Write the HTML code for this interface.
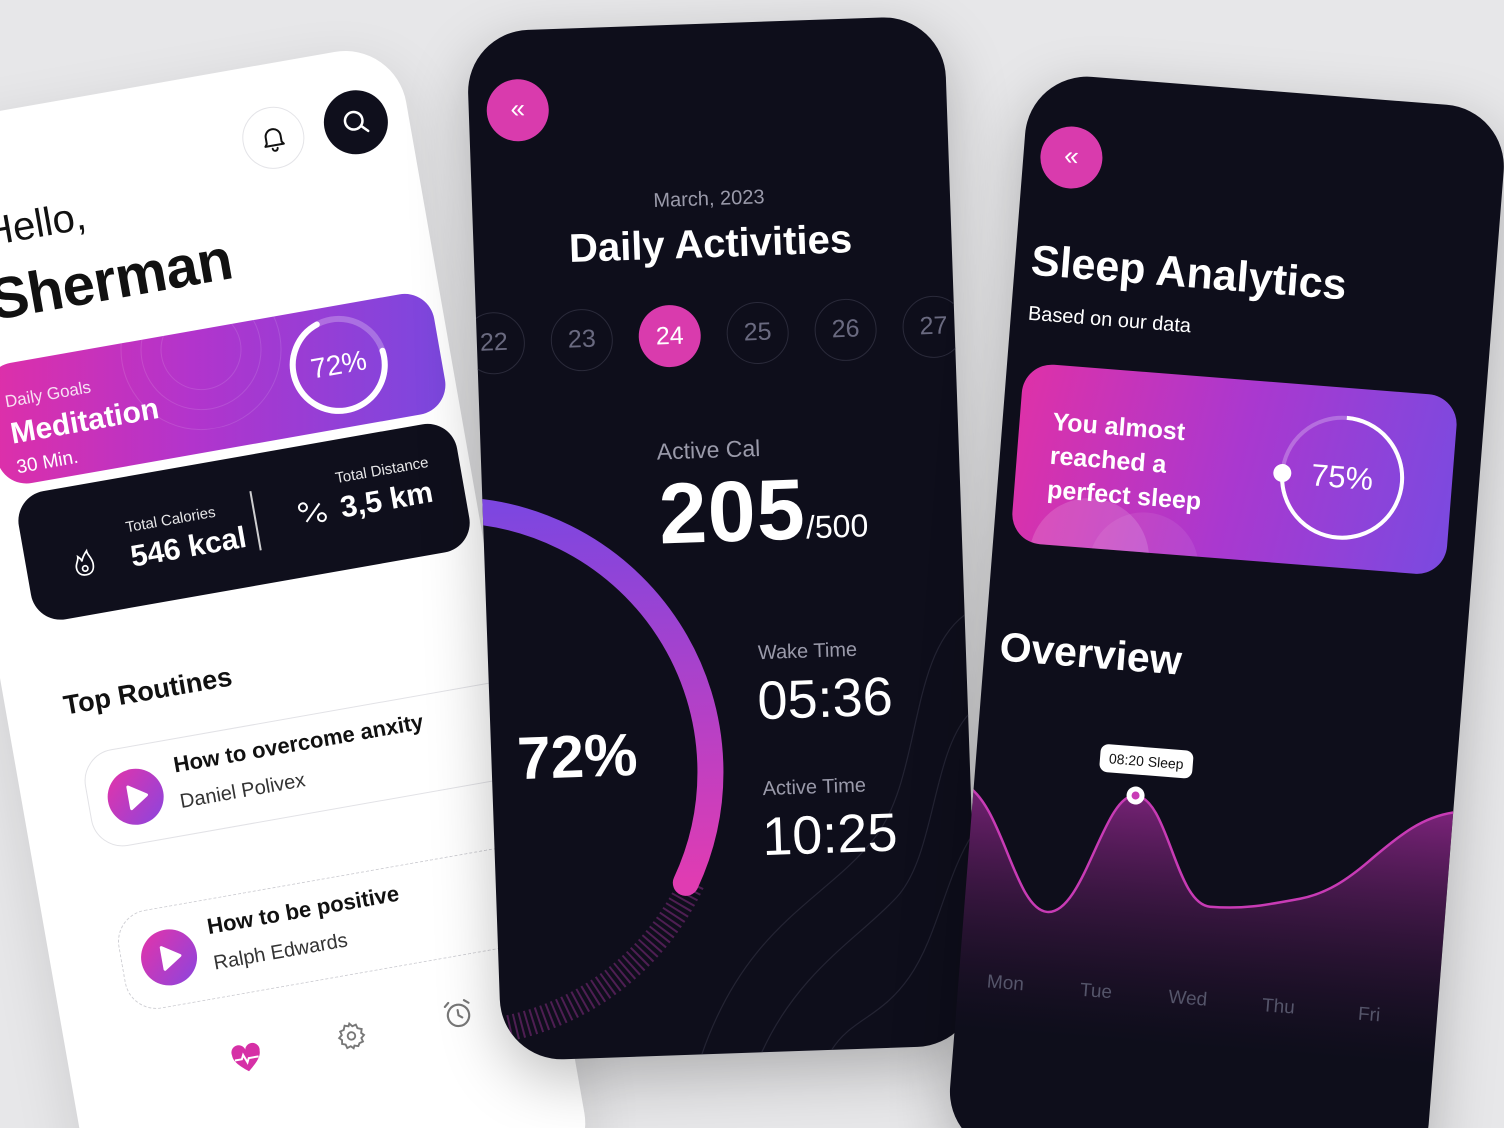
<!DOCTYPE html>
<html style="width:1504px;height:1128px;overflow:hidden"><head><meta charset="utf-8"><style>
*{margin:0;padding:0;box-sizing:border-box}
body{width:1504px;height:1128px;overflow:hidden;background:#e7e7e9;font-family:"Liberation Sans",sans-serif;position:relative}
.ph{position:absolute;transform-origin:0 0;border-radius:62px;overflow:hidden}
.a{position:absolute}
.c{position:absolute;transform:translate(-50%,-50%);white-space:nowrap}
.w{color:#fff}
</style></head><body>

<!-- LEFT PHONE -->
<div class="ph" style="left:-97px;top:128px;width:500px;height:1150px;background:#fff;transform:rotate(-10deg);z-index:1;box-shadow:0 20px 60px rgba(0,0,0,.12)">
  <div class="c" style="left:363px;top:74px;width:62px;height:62px;border-radius:50%;border:1.5px solid #e4e4e8;background:#fff;transform:translate(-50%,-50%)">
    <svg width="30" height="30" viewBox="0 0 24 24" style="position:absolute;left:15px;top:15px" fill="none" stroke="#111" stroke-width="1.6" stroke-linecap="round" stroke-linejoin="round"><path d="M6 16V11a6 6 0 0 1 12 0v5l1.5 2h-15z"/><path d="M10 20.5a2 2 0 0 0 4 0"/></svg>
  </div>
  <div class="c" style="left:447px;top:73px;width:64px;height:64px;border-radius:50%;background:#0f0f1c">
    <svg width="30" height="30" viewBox="0 0 24 24" style="position:absolute;left:17px;top:17px" fill="none" stroke="#fff" stroke-width="2" stroke-linecap="round"><circle cx="10.5" cy="10.5" r="7"/><path d="M16 16l4.5 4.5"/></svg>
  </div>
  <div class="a" style="left:62px;top:96px;font-size:40px;color:#111">Hello,</div>
  <div class="a" style="left:56px;top:152px;font-size:58px;font-weight:bold;color:#111;letter-spacing:-0.5px">Sherman</div>

  <div class="a" style="left:45px;top:382px;width:445px;height:130px;border-radius:30px;background:#0f0f1c">
    <div class="a w" style="left:105px;top:42px;font-size:15px;opacity:.9">Total Calories</div>
    <div class="a w" style="left:105px;top:64px;font-size:30px;font-weight:bold">546 kcal</div>
    <svg class="a" style="left:45px;top:62px" width="26" height="30" viewBox="0 0 24 28" fill="none" stroke="#fff" stroke-width="1.6"><path d="M12 26c-5 0-8-3-8-8 0-4 3-6 3-10 2 2 3 3 3 5 1-3 3-6 6-9 0 4 4 7 4 13 0 6-3 9-8 9z"/><circle cx="12" cy="20" r="2.5"/></svg>
    <div class="a" style="left:233px;top:36px;width:2px;height:60px;background:#fff;opacity:.8"></div>
    <div class="a w" style="left:320px;top:30px;font-size:15px;opacity:.9">Total Distance</div>
    <div class="a w" style="left:320px;top:52px;font-size:30px;font-weight:bold">3,5 km</div>
    <svg class="a" style="left:276px;top:54px" width="32" height="28" viewBox="0 0 32 28" fill="none" stroke="#fff" stroke-width="2"><circle cx="7" cy="7" r="4"/><circle cx="24" cy="20" r="4"/><path d="M24 6L8 22"/></svg>
  </div>

  <div class="a" style="left:35px;top:250px;width:455px;height:122px;border-radius:30px;background:linear-gradient(100deg,#e02fa7 0%,#b234cc 45%,#7a48df 100%);overflow:hidden">
    <svg class="a" style="left:90px;top:-60px" width="260" height="160"><g fill="none" stroke="#fff" stroke-opacity=".12"><circle cx="130" cy="80" r="40"/><circle cx="130" cy="80" r="60"/><circle cx="130" cy="80" r="80"/></g></svg>
    <div class="a w" style="left:18px;top:28px;font-size:17px;opacity:.85">Daily Goals</div>
    <div class="a w" style="left:18px;top:54px;font-size:30px;font-weight:bold">Meditation</div>
    <div class="a w" style="left:18px;top:94px;font-size:19px">30 Min.</div>
    <svg class="a" style="left:301px;top:7px" width="104" height="104" viewBox="0 0 104 104"><circle cx="52" cy="52" r="46" fill="none" stroke="#fff" stroke-opacity=".25" stroke-width="6"/><circle cx="52" cy="52" r="46" fill="none" stroke="#fff" stroke-width="6" stroke-linecap="round" stroke-dasharray="208 289" transform="rotate(-8 52 52)"/></svg>
    <div class="c w" style="left:353px;top:59px;font-size:28px">72%</div>
  </div>

  <div class="a" style="left:58px;top:582px;font-size:27px;font-weight:bold;color:#111">Top Routines</div>

  <div class="a" style="left:65px;top:648px;width:520px;height:98px;border-radius:32px;border:1.5px solid #e2e2e6;background:#fff">
    <div class="c" style="left:47px;top:50px;width:56px;height:56px;border-radius:50%;background:linear-gradient(135deg,#e533a8,#8a45df)"><svg width="56" height="56" viewBox="0 0 56 56"><path d="M22 17l17 11-17 11z" fill="#fff" stroke="#fff" stroke-width="3" stroke-linejoin="round"/></svg></div>
    <div class="a" style="left:90px;top:13px;font-size:22px;font-weight:bold;color:#111">How to overcome anxity</div>
    <div class="a" style="left:90px;top:52px;font-size:20px;color:#333">Daniel Polivex</div>
  </div>
  <div class="a" style="left:70px;top:812px;width:520px;height:100px;border-radius:32px;border:1.5px dashed #cfcfd4;background:#fff">
    <div class="c" style="left:47px;top:50px;width:56px;height:56px;border-radius:50%;background:linear-gradient(135deg,#e533a8,#8a45df)"><svg width="56" height="56" viewBox="0 0 56 56"><path d="M22 17l17 11-17 11z" fill="#fff" stroke="#fff" stroke-width="3" stroke-linejoin="round"/></svg></div>
    <div class="a" style="left:90px;top:14px;font-size:22px;font-weight:bold;color:#111">How to be positive</div>
    <div class="a" style="left:90px;top:53px;font-size:20px;color:#333">Ralph Edwards</div>
  </div>

  <svg class="c" style="left:177px;top:976px" width="32" height="30" viewBox="0 0 32 30"><path d="M16 28C6 20 2 15 2 9.5A7 7 0 0 1 16 6a7 7 0 0 1 14 3.5C30 15 26 20 16 28z" fill="#d630a6"/><path d="M4 15h7l2-4 3 8 2-4h10" fill="none" stroke="#fff" stroke-width="2"/></svg>
  <svg class="c" style="left:284px;top:972px" width="30" height="30" viewBox="0 0 24 24" fill="none" stroke="#777" stroke-width="1.5"><circle cx="12" cy="12" r="3"/><path d="M12 2l2 2.5 3-.8.8 3L21 8l-1 3 2 2-2.5 2 .8 3-3 .8L16 21l-3-1-1 2-2-2-3 1-.8-3L3.5 17 4 14 2 12l2.5-2L3.7 7l3-.8L8 3l3 1z"/></svg>
  <svg class="c" style="left:393px;top:969px" width="32" height="32" viewBox="0 0 24 24" fill="none" stroke="#777" stroke-width="1.6" stroke-linecap="round"><circle cx="12" cy="13" r="8"/><path d="M12 9v4l2.5 2M3 5l3-2.5M21 5l-3-2.5"/></svg>
</div>

<!-- MIDDLE PHONE -->
<div class="ph" style="left:466px;top:32px;width:478px;height:1030px;background:#0e0e1b;transform:rotate(-2deg);z-index:2;box-shadow:0 20px 60px rgba(0,0,0,.25)">
  <svg class="a" style="left:0;top:0" width="478" height="1030">
    <defs><linearGradient id="ag" x1="0" y1="0" x2="0" y2="1"><stop offset="0" stop-color="#7d46e0"/><stop offset="1" stop-color="#e03cb2"/></linearGradient></defs>
    <g fill="none" stroke="#2a2a3a" stroke-width="1.2" opacity=".8">
      <path d="M478 600C420 640 430 760 380 820S250 900 200 1030"/>
      <path d="M478 700C440 740 440 840 400 880S300 950 260 1030"/>
      <path d="M478 820C450 860 440 920 410 960S350 1000 330 1030"/>
    </g>
    <path d="M196 858A262 262 0 0 1 8 997" fill="none" stroke="#7a2a78" stroke-width="26" stroke-dasharray="2 4" opacity=".6"/>
    <path d="M-37 477A262 262 0 0 1 190 858" fill="none" stroke="url(#ag)" stroke-width="26" stroke-linecap="round"/>
  </svg>
  <div class="c" style="left:49px;top:80px;width:62px;height:62px;border-radius:50%;background:#d93bad;color:#fff;font-size:26px;line-height:58px;text-align:center">«</div>
  <div class="c" style="left:237px;top:176px;font-size:20px;color:#9a9aaa">March, 2023</div>
  <div class="c w" style="left:237px;top:221px;font-size:40px;font-weight:bold">Daily Activities</div>
  <div class="c" style="left:17px;top:312px;width:62px;height:62px;border-radius:50%;border:1.5px solid #2a2a3a;color:#6a6a80;font-size:25px;line-height:59px;text-align:center">22</div>
  <div class="c" style="left:105px;top:312px;width:62px;height:62px;border-radius:50%;border:1.5px solid #2a2a3a;color:#6a6a80;font-size:25px;line-height:59px;text-align:center">23</div>
  <div class="c" style="left:193px;top:311px;width:62px;height:62px;border-radius:50%;background:#d93bad;color:#fff;font-size:25px;line-height:62px;text-align:center">24</div>
  <div class="c" style="left:281px;top:311px;width:62px;height:62px;border-radius:50%;border:1.5px solid #2a2a3a;color:#6a6a80;font-size:25px;line-height:59px;text-align:center">25</div>
  <div class="c" style="left:369px;top:311px;width:62px;height:62px;border-radius:50%;border:1.5px solid #2a2a3a;color:#6a6a80;font-size:25px;line-height:59px;text-align:center">26</div>
  <div class="c" style="left:457px;top:311px;width:62px;height:62px;border-radius:50%;border:1.5px solid #2a2a3a;color:#6a6a80;font-size:25px;line-height:59px;text-align:center">27</div>
  <div class="a" style="left:176px;top:413px;font-size:23px;color:#9a9aaa">Active Cal</div>
  <div class="a w" style="left:176px;top:440px;font-size:86px;font-weight:bold;letter-spacing:1px">205<span style="font-size:32px;font-weight:normal;letter-spacing:0">/500</span></div>
  <div class="c w" style="left:86px;top:728px;font-size:60px;font-weight:bold">72%</div>
  <div class="a" style="left:270px;top:620px;font-size:20px;color:#9a9aaa">Wake Time</div>
  <div class="a w" style="left:268px;top:648px;font-size:54px">05:36</div>
  <div class="a" style="left:270px;top:756px;font-size:20px;color:#9a9aaa">Active Time</div>
  <div class="a w" style="left:268px;top:784px;font-size:54px">10:25</div>
</div>

<!-- RIGHT PHONE -->
<div class="ph" style="left:1030px;top:72px;width:480px;height:1080px;background:#0e0e1b;transform:rotate(4.5deg);z-index:3;box-shadow:0 20px 60px rgba(0,0,0,.25)">
  <svg class="a" style="left:0;top:0" width="480" height="1080">
    <defs><linearGradient id="fg" x1="0" y1="0" x2="0" y2="1"><stop offset="0" stop-color="#a02a9a" stop-opacity=".75"/><stop offset="1" stop-color="#3a1440" stop-opacity="0"/></linearGradient></defs>
    <path d="M-10 715C30 730 50 836 83 836C120 836 130 713 162 713C195 713 210 818 245 818C280 818 300 812 334 803C360 796 380 780 400 760C430 730 450 712 480 705L480 960L-10 960Z" fill="url(#fg)"/>
    <path d="M-10 715C30 730 50 836 83 836C120 836 130 713 162 713C195 713 210 818 245 818C280 818 300 812 334 803C360 796 380 780 400 760C430 730 450 712 480 705" fill="none" stroke="#c83bb5" stroke-width="2.5"/>
    <circle cx="162" cy="713" r="9" fill="#fff"/><circle cx="162" cy="713" r="4" fill="#c83bb5"/>
  </svg>
  <div class="c" style="left:48px;top:82px;width:62px;height:62px;border-radius:50%;background:#d93bad;color:#fff;font-size:26px;line-height:58px;text-align:center">«</div>
  <div class="a w" style="left:16px;top:164px;font-size:43px;font-weight:bold">Sleep Analytics</div>
  <div class="a w" style="left:17px;top:230px;font-size:20px">Based on our data</div>
  <div class="a" style="left:17px;top:290px;width:436px;height:180px;border-radius:30px;background:linear-gradient(100deg,#de31a8 0%,#aa38cf 50%,#7a4ae0 100%);overflow:hidden">
    <div class="a" style="left:20px;top:130px;width:120px;height:120px;border-radius:50%;background:rgba(255,255,255,.15)"></div>
    <div class="a" style="left:80px;top:140px;width:110px;height:110px;border-radius:50%;background:rgba(255,255,255,.08)"></div>
    <div class="a w" style="left:33px;top:40px;font-size:25px;font-weight:bold;line-height:34px">You almost<br>reached a<br>perfect sleep</div>
    <svg class="a" style="left:256px;top:20px" width="140" height="140" viewBox="0 0 140 140"><circle cx="70" cy="70" r="60" fill="none" stroke="#fff" stroke-opacity=".25" stroke-width="4"/><circle cx="70" cy="70" r="60" fill="none" stroke="#fff" stroke-width="4" stroke-dasharray="283 377" transform="rotate(-90 70 70)"/><circle cx="10" cy="70" r="9" fill="#fff"/></svg>
    <div class="c w" style="left:326px;top:90px;font-size:31px">75%</div>
  </div>
  <div class="a w" style="left:15px;top:552px;font-size:41px;font-weight:bold">Overview</div>
  <div class="c" style="left:170px;top:678px;background:#fff;border-radius:8px;padding:6px 9px;font-size:14px;color:#111">08:20 Sleep</div>
  <div class="c" style="left:47px;top:911px;font-size:19px;color:#55556a">Mon</div>
  <div class="c" style="left:138px;top:912px;font-size:19px;color:#55556a">Tue</div>
  <div class="c" style="left:230px;top:912px;font-size:19px;color:#55556a">Wed</div>
  <div class="c" style="left:321px;top:913px;font-size:19px;color:#55556a">Thu</div>
  <div class="c" style="left:412px;top:914px;font-size:19px;color:#55556a">Fri</div>
</div>
</body></html>
